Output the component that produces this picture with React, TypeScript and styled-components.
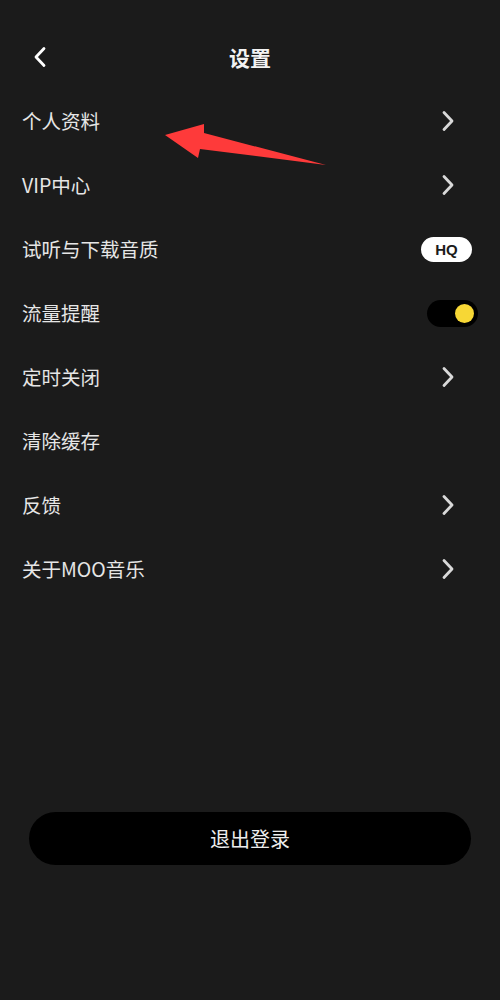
import { FC } from 'react';
import styled, { createGlobalStyle } from 'styled-components';

const GlobalStyle = createGlobalStyle`
  html, body {
    margin: 0;
    padding: 0;
    background: #1b1b1b;
  }
  body {
    font-family: "Noto Sans CJK SC", "Noto Sans", sans-serif;
    color: #e8e8e8;
  }
`;

const Page = styled.div`
  position: relative;
  width: 500px;
  height: 1000px;
  padding-top: 25px;
  box-sizing: border-box;
  background: #1b1b1b;
`;

const Header = styled.div`
  position: relative;
  height: 64px;
  display: flex;
  align-items: center;
  justify-content: center;
`;

const BackButton = styled.div`
  position: absolute;
  left: 33px;
  top: 50%;
  transform: translateY(-50%);
  display: flex;
`;

const Title = styled.h1`
  margin: 0;
  font-size: 21px;
  font-weight: 700;
  color: #f2f2f2;
  line-height: 1;
`;

const List = styled.div`
  display: flex;
  flex-direction: column;
`;

const Row = styled.div`
  height: 64px;
  display: flex;
  align-items: center;
  justify-content: space-between;
  padding: 0 22px 0 22px;
`;

const Label = styled.span`
  font-size: 19.5px;
  color: #e6e6e6;
  line-height: 1;
`;

const Arrow = styled.span`
  display: flex;
  margin-right: 23px;
`;

const Badge = styled.span`
  display: inline-flex;
  align-items: center;
  justify-content: center;
  width: 51px;
  height: 25px;
  margin-right: 6px;
  border-radius: 13px;
  background: #ffffff;
  color: #1b1b1b;
  font-family: "Liberation Sans", Arial, sans-serif;
  font-weight: 700;
  font-size: 15px;
`;

const Toggle = styled.span<{ on: boolean }>`
  display: inline-flex;
  align-items: center;
  justify-content: ${({ on }) => (on ? 'flex-end' : 'flex-start')};
  width: 51px;
  height: 27px;
  padding: 0 4px;
  box-sizing: border-box;
  border-radius: 14px;
  background: #000000;
`;

const Knob = styled.span`
  width: 19px;
  height: 19px;
  border-radius: 50%;
  background: #f7d735;
`;

const Footer = styled.div`
  margin-top: 211px;
  display: flex;
  justify-content: center;
`;

const LogoutButton = styled.button`
  width: 442px;
  height: 53px;
  border: none;
  border-radius: 27px;
  background: #000000;
  color: #ededed;
  font-family: inherit;
  font-size: 20px;
  cursor: pointer;
`;

const Annotation = styled.svg`
  position: absolute;
  left: 0;
  top: 0;
  pointer-events: none;
`;

const Chevron: FC<{ left?: boolean }> = ({ left }) => (
  <svg width="14" height="22" viewBox="0 0 14 22" fill="none">
    <path
      d={left ? 'M11 2.5 L3 11 L11 19.5' : 'M3 2.5 L11 11 L3 19.5'}
      stroke={left ? '#ffffff' : '#d9d9d9'}
      strokeWidth="2.8"
      strokeLinecap="round"
      strokeLinejoin="round"
    />
  </svg>
);

type Item = { label: string; trailing?: 'chevron' | 'hq' | 'toggle' };

const items: Item[] = [
  { label: '个人资料', trailing: 'chevron' },
  { label: 'VIP中心', trailing: 'chevron' },
  { label: '试听与下载音质', trailing: 'hq' },
  { label: '流量提醒', trailing: 'toggle' },
  { label: '定时关闭', trailing: 'chevron' },
  { label: '清除缓存' },
  { label: '反馈', trailing: 'chevron' },
  { label: '关于MOO音乐', trailing: 'chevron' },
];

const App: FC = () => (
  <Page>
    <GlobalStyle />
    <Header>
      <BackButton>
        <Chevron left />
      </BackButton>
      <Title>设置</Title>
    </Header>
    <List>
      {items.map((item) => (
        <Row key={item.label}>
          <Label>{item.label}</Label>
          {item.trailing === 'chevron' && (
            <Arrow>
              <Chevron />
            </Arrow>
          )}
          {item.trailing === 'hq' && <Badge>HQ</Badge>}
          {item.trailing === 'toggle' && (
            <Toggle on>
              <Knob />
            </Toggle>
          )}
        </Row>
      ))}
    </List>
    <Footer>
      <LogoutButton>退出登录</LogoutButton>
    </Footer>
    <Annotation width="500" height="1000" viewBox="0 0 500 1000">
      <polygon
        points="165,135 204,124 204,133 326,165 200,149 198,158"
        fill="#fe3a3a"
      />
    </Annotation>
  </Page>
);

export default App;
